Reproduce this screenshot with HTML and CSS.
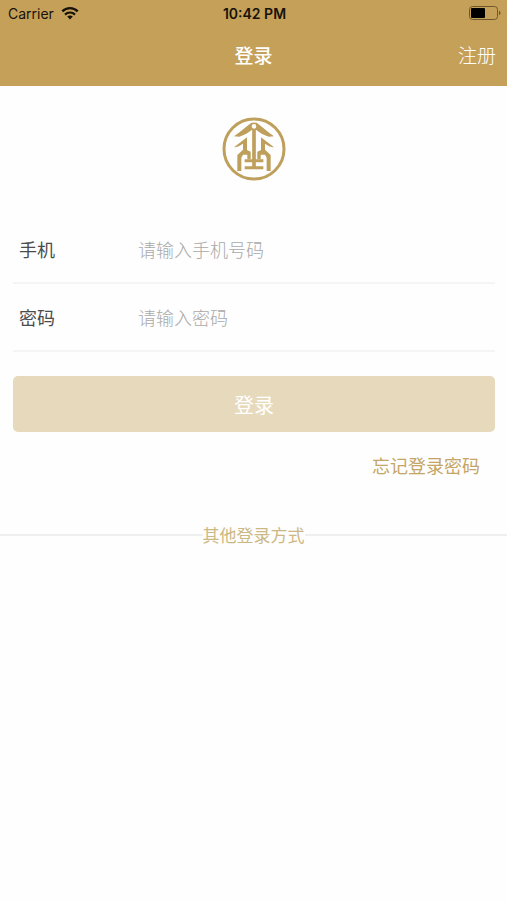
FILE: index.html
```
<!DOCTYPE html>
<html lang="zh">
<head>
    <meta charset="UTF-8">
    <meta name="viewport" content="width=device-width, initial-scale=1.0">
    <title>登录</title>
    <link rel="stylesheet" href="styles.css">
</head>
<body>
    <header class="header">
        <div class="status-bar">
            <div class="carrier">
                <span>Carrier</span>
                <svg class="wifi" width="18" height="14" viewBox="0 0 18 14" fill="none" stroke="#17120a" stroke-width="3">
                    <path d="M1.3 5.3C5.6 1 12.4 1 16.7 5.3" stroke-width="2.4"/>
                    <path d="M4 8.6c2.8-2.8 7.2-2.8 10 0" stroke-width="2.2"/>
                    <path d="M9 13.4L6.2 10.6c1.6-1.5 4-1.5 5.6 0z" fill="#17120a" stroke="none"/>
                </svg>
            </div>
            <span class="time">10:42 PM</span>
            <svg class="battery" width="32" height="14" viewBox="0 0 32 14">
                <rect x="0.5" y="0.5" width="28" height="13" rx="3" fill="none" stroke="#6f572b"/>
                <rect x="2" y="2" width="14" height="10" rx="1" fill="#000"/>
                <path d="M30 5v4c2-.6 2-3.4 0-4z" fill="#6f572b"/>
            </svg>
        </div>
        <nav class="nav-bar">
            <h1>登录</h1>
            <a class="register" href="#">注册</a>
        </nav>
    </header>

    <main>
        <svg class="logo" width="64" height="64" viewBox="0 0 192 192" fill="none" stroke="#bf9f5c">
            <circle cx="96" cy="96" r="90" stroke-width="9"/>
            <g fill="#bf9f5c" stroke="none">
                <path d="M36 58C54 45 72 30 88 17H104C120 30 138 45 156 58L140 59C125 54 112 46 102 38H90C80 46 67 54 52 59Z"/>
                <path d="M36 91L75 61V99L86 104V127H76V113H63L58 122V162H46V114L63 98V80C55 86 46 90 36 91Z"/>
                <path d="M156 91L117 61V99L106 104V127H116V113H129L134 122V162H146V114L129 98V80C137 86 146 90 156 91Z"/>
            </g>
            <path d="M96 36V152" stroke-width="11"/>
            <path d="M68 131H124M68 152H124" stroke-width="9"/>
            <circle cx="96" cy="28" r="9" stroke-width="4" fill="#fefefe"/>
        </svg>

        <form class="login-form">
            <div class="field">
                <label for="phone">手机</label>
                <input type="tel" id="phone" placeholder="请输入手机号码">
            </div>
            <div class="field">
                <label for="password">密码</label>
                <input type="password" id="password" placeholder="请输入密码">
            </div>
            <button type="submit">登录</button>
            <a class="forgot" href="#">忘记登录密码</a>
        </form>

        <div class="other-login">其他登录方式</div>
    </main>
</body>
</html>
```

FILE: styles.css
```
body {
    margin: 0;
    min-height: 100vh;
    background: #fefefe;
    font-family: "Noto Sans CJK SC", sans-serif;
    color: #4c4c4c;
}

a {
    text-decoration: none;
}

.header {
    background: #c5a059;
    color: #ffffff;
}

.status-bar {
    display: grid;
    grid-template-columns: 1fr auto 1fr;
    align-items: center;
    height: 26px;
    padding: 0 6px 0 8px;
    font-family: Inter, sans-serif;
    font-size: 14px;
    color: #17120a;
}

.carrier {
    display: flex;
    align-items: center;
    gap: 7px;
}

.time {
    font-weight: 600;
}

.battery {
    justify-self: end;
}

.nav-bar {
    display: grid;
    grid-template-columns: 1fr auto 1fr;
    align-items: center;
    height: 56px;
    padding: 0 11px 4px;
}

.nav-bar h1 {
    grid-column: 2;
    margin: 0;
    font-size: 19px;
    font-weight: 500;
}

.register {
    justify-self: end;
    font-size: 19px;
    font-weight: 300;
    color: #ffffff;
}

.logo {
    display: block;
    margin: 31px auto 35px;
}

.login-form {
    display: flex;
    flex-direction: column;
    padding: 0 12px 0 13px;
}

.field {
    display: flex;
    align-items: center;
    height: 66px;
    padding-left: 6px;
    border-bottom: 2px solid #f5f5f5;
    font-size: 18px;
}

.field label {
    width: 119px;
}

.field input {
    flex: 1;
    min-width: 0;
    padding: 0;
    border: none;
    outline: none;
    background: transparent;
    font: inherit;
    color: inherit;
}

.field input::placeholder {
    font-weight: 300;
    color: #a9a9a9;
}

button {
    height: 56px;
    margin-top: 24px;
    border: none;
    border-radius: 5px;
    background: #e7dabc;
    font-family: inherit;
    font-size: 20px;
    color: #ffffff;
    cursor: pointer;
}

.forgot {
    align-self: flex-end;
    margin: 20px 15px 0 0;
    font-size: 18px;
    line-height: 26px;
    color: #c5a566;
}

.other-login {
    display: flex;
    align-items: center;
    margin-top: 44px;
    font-size: 17px;
    line-height: 26px;
    color: #ccb885;
}

.other-login::before,
.other-login::after {
    content: "";
    flex: 1;
    height: 2px;
    background: #efefef;
}
```
